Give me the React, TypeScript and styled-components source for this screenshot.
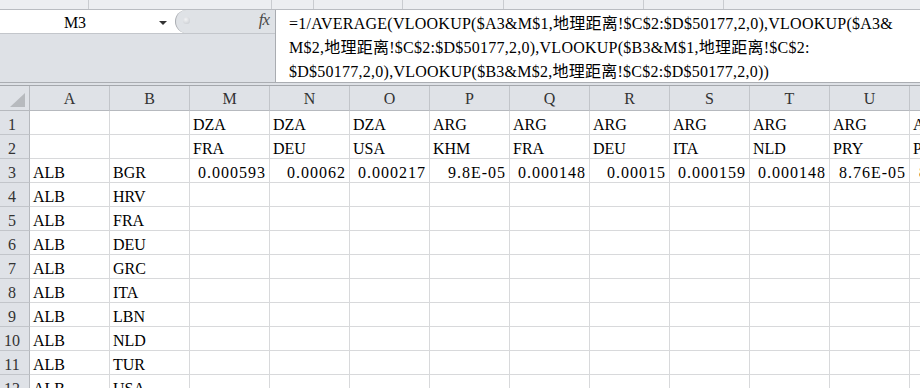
import React from 'react';
import styled, { createGlobalStyle } from 'styled-components';

const GlobalStyle = createGlobalStyle`
  html, body {
    margin: 0;
    padding: 0;
    background: #ffffff;
    overflow: hidden;
  }
  body {
    font-family: 'Liberation Serif', 'Noto Sans CJK SC', serif;
    font-size: 16px;
    color: #000;
  }
`;

const Window = styled.div`
  width: 920px;
  height: 388px;
  overflow: hidden;
  background: #fff;
`;

/* remains of the ribbon above the formula bar */
const RibbonEdge = styled.div`
  display: flex;
  height: 9px;
  background: #eceef1;
  border-bottom: 1px solid #b9bcc1;
`;

const RibbonGroup = styled.div<{ $w?: number }>`
  flex: ${({ $w }) => ($w ? `0 0 ${$w}px` : '1')};
  box-sizing: border-box;
  border-right: ${({ $w }) => ($w ? '1px solid #c9ccd0' : 'none')};
`;

const FormulaBar = styled.div`
  display: flex;
  height: 73px;
  box-sizing: border-box;
  border-bottom: 1px solid #aaadb2;
  background: #dee1e6;
`;

const LeftPane = styled.div`
  flex: 0 0 275px;
  display: flex;
  flex-direction: column;
`;

const NameRow = styled.div`
  display: flex;
  height: 24px;
  box-sizing: border-box;
  border-bottom: 1px solid #c3c6cb;
  background: #fff;
`;

const NameBox = styled.div`
  flex: 0 0 175px;
  display: flex;
  align-items: flex-start;
  padding-top: 3px;
  box-sizing: border-box;
  line-height: 20px;
`;

const NameText = styled.span`
  flex: 0 0 150px;
  text-align: center;
`;

const DropArrow = styled.span`
  margin-top: 8px;
  margin-left: 9px;
  width: 0;
  height: 0;
  border-left: 4px solid transparent;
  border-right: 4px solid transparent;
  border-top: 4px solid #333;
`;

const FxArea = styled.div`
  flex: 1;
  display: flex;
  align-items: center;
  justify-content: space-between;
  padding: 0 6px 0 7px;
  background: #dfe2e6;
  border-left: 1px solid #a9acb1;
  border-radius: 12px 0 0 12px;
`;

const Knob = styled.span`
  width: 7px;
  height: 7px;
  border-radius: 50%;
  background: radial-gradient(circle at 40% 35%, #f2f3f5, #c4c7cc);
  margin-top: -2px;
`;

const FxGlyph = styled.span`
  font-family: 'Liberation Serif', serif;
  font-style: italic;
  font-size: 17px;
  letter-spacing: -1px;
  color: #4a4a4a;
  margin-top: -3px;
`;

const FormulaBox = styled.div`
  flex: 1;
  background: #fff;
  border-left: 1px solid #a9acb1;
  padding: 2px 0 0 13px;
  line-height: 24px;
  letter-spacing: 0.25px;
  white-space: pre;
  overflow: hidden;
`;

const Gap = styled.div`
  height: 2px;
  background: #dee1e6;
`;

const Sheet = styled.div`
  border-top: 1px solid #a4a7ac;
`;

const Row = styled.div<{ $head?: boolean }>`
  display: flex;
  height: ${({ $head }) => ($head ? 25 : 24)}px;
`;

const Corner = styled.div`
  flex: 0 0 30px;
  position: relative;
  box-sizing: border-box;
  background: #dfe2e7;
  border-right: 1px solid #b6b9be;
  border-bottom: 1px solid #b6b9be;

  &::after {
    content: '';
    position: absolute;
    right: 4px;
    bottom: 3px;
    width: 0;
    height: 0;
    border-left: 15px solid transparent;
    border-bottom: 14px solid #b7babe;
  }
`;

const ColHead = styled.div`
  flex: 0 0 80px;
  box-sizing: border-box;
  background: #dfe2e7;
  border-right: 1px solid #c2c5ca;
  border-bottom: 1px solid #b6b9be;
  padding-top: 2px;
  line-height: 22px;
  text-align: center;
  color: #333;
`;

const RowHead = styled.div`
  flex: 0 0 30px;
  box-sizing: border-box;
  background: #dfe2e7;
  border-right: 1px solid #b6b9be;
  border-bottom: 1px solid #c2c5ca;
  padding: 5px 5px 0 0;
  line-height: 18px;
  text-align: center;
  color: #333;
`;

const Cell = styled.div<{ $num?: boolean }>`
  flex: 0 0 80px;
  box-sizing: border-box;
  border-right: 1px solid #d8d9db;
  border-bottom: 1px solid #d8d9db;
  padding: 5px 3px 0 3px;
  line-height: 18px;
  white-space: nowrap;
  overflow: visible;
  text-align: ${({ $num }) => ($num ? 'right' : 'left')};
  letter-spacing: ${({ $num }) => ($num ? '1px' : '0')};
`;

const ribbon = [89, 183, 42, 89, 101, 140, 80];

const formula = [
  '=1/AVERAGE(VLOOKUP($A3&M$1,地理距离!$C$2:$D$50177,2,0),VLOOKUP($A3&',
  'M$2,地理距离!$C$2:$D$50177,2,0),VLOOKUP($B3&M$1,地理距离!$C$2:',
  '$D$50177,2,0),VLOOKUP($B3&M$2,地理距离!$C$2:$D$50177,2,0))',
];

const columns = ['A', 'B', 'M', 'N', 'O', 'P', 'Q', 'R', 'S', 'T', 'U', 'V'];

const blank = (n: number) => Array.from({ length: n }, () => '');

const rows: string[][] = [
  ['', '', 'DZA', 'DZA', 'DZA', 'ARG', 'ARG', 'ARG', 'ARG', 'ARG', 'ARG', 'ARG'],
  ['', '', 'FRA', 'DEU', 'USA', 'KHM', 'FRA', 'DEU', 'ITA', 'NLD', 'PRY', 'PER'],
  [
    'ALB', 'BGR', '0.000593', '0.00062', '0.000217', '9.8E-05',
    '0.000148', '0.00015', '0.000159', '0.000148', '8.76E-05', '8.91E-05',
  ],
  ['ALB', 'HRV', ...blank(10)],
  ['ALB', 'FRA', ...blank(10)],
  ['ALB', 'DEU', ...blank(10)],
  ['ALB', 'GRC', ...blank(10)],
  ['ALB', 'ITA', ...blank(10)],
  ['ALB', 'LBN', ...blank(10)],
  ['ALB', 'NLD', ...blank(10)],
  ['ALB', 'TUR', ...blank(10)],
  ['ALB', 'USA', ...blank(10)],
];

const isNumber = (v: string) => v !== '' && !isNaN(Number(v));

function App() {
  return (
    <>
      <GlobalStyle />
      <Window>
        <RibbonEdge>
          {ribbon.map((w, i) => (
            <RibbonGroup key={i} $w={w} />
          ))}
          <RibbonGroup />
        </RibbonEdge>

        <FormulaBar>
          <LeftPane>
            <NameRow>
              <NameBox>
                <NameText>M3</NameText>
                <DropArrow />
              </NameBox>
              <FxArea>
                <Knob />
                <FxGlyph>fx</FxGlyph>
              </FxArea>
            </NameRow>
          </LeftPane>
          <FormulaBox>{formula.join('\n')}</FormulaBox>
        </FormulaBar>

        <Gap />

        <Sheet>
          <Row $head>
            <Corner />
            {columns.map((c) => (
              <ColHead key={c}>{c}</ColHead>
            ))}
          </Row>
          {rows.map((r, i) => (
            <Row key={i}>
              <RowHead>{i + 1}</RowHead>
              {r.map((v, j) => (
                <Cell key={j} $num={isNumber(v)}>
                  {v}
                </Cell>
              ))}
            </Row>
          ))}
        </Sheet>
      </Window>
    </>
  );
}

export default App;
